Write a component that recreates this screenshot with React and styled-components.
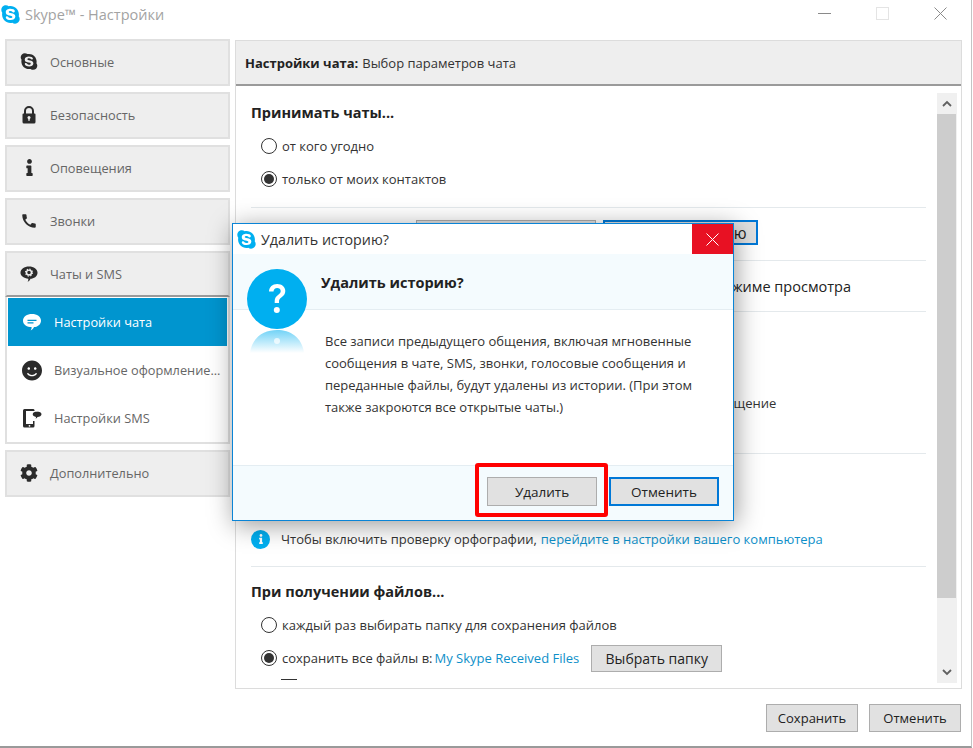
import React from "react";
import styled, { createGlobalStyle } from "styled-components";
import { FaSkype, FaInfo, FaCog, FaSmile } from "react-icons/fa";
import { MdCall } from "react-icons/md";

const Global = createGlobalStyle`
  html, body { margin: 0; padding: 0; background: #fff; overflow: hidden; }
  * { box-sizing: border-box; }
  body { font-family: "Open Sans", "Noto Sans", "Liberation Sans", sans-serif; color: #222; }
`;

const Page = styled.div`
  width: 973px;
  height: 748px;
  background: #fff;
`;

const Window = styled.div`
  position: relative;
  width: 972px;
  height: 748px;
  background: #fff;
  border-right: 1px solid #c4c4c4;
  border-bottom: 2px solid #9a9a9a;
  display: flex;
  flex-direction: column;
`;

const TitleBar = styled.header`
  height: 39px;
  flex: none;
  display: flex;
  align-items: flex-start;
  padding: 4px 0 0 0;
`;
const TitleText = styled.span`
  font-size: 14.5px;
  line-height: 20px;
  color: #a3a3a3;
  margin-left: 4px;
  margin-top: 1px;
`;
const TitleLogo = styled(FaSkype)`
  width: 21px;
  height: 21px;
  color: #00aff0;
  flex: none;
`;
const WinButtons = styled.div`
  margin-left: auto;
  display: flex;
  align-items: center;
  margin-right: 24px;
  margin-top: 3px;
  gap: 45px;
`;
const WinIcon = styled.svg`
  width: 13px;
  height: 13px;
  display: block;
  fill: none;
  stroke: ${p => p.$stroke || "#8a8a8a"};
  stroke-width: 1;
`;

const Body = styled.div`
  display: flex;
  height: 650px;
  flex: none;
  padding-left: 5px;
  gap: 5px;
`;

const Nav = styled.nav`
  width: 225px;
  flex: none;
  display: flex;
  flex-direction: column;
  gap: 6px;
`;
const NavGroup = styled.div`
  display: flex;
  flex-direction: column;
`;
const NavItem = styled.div`
  height: ${p => p.$h || 47}px;
  display: flex;
  align-items: center;
  background: #eeeeee;
  border: 2px solid #e0e0e0;
  ${p => p.$open && "border-bottom: 2px solid #9a9a9a;"}
  padding: 0 0 ${p => (p.$open ? 0 : 2)}px 13px;
  font-size: 12.75px;
  color: #666;
`;
const NavIconWrap = styled.span`
  width: 18px;
  height: 20px;
  margin-right: 12px;
  display: flex;
  align-items: center;
  justify-content: center;
  color: #2b2b2b;
  flex: none;
  svg { display: block; }
`;
const SubList = styled.div`
  height: 147px;
  flex: none;
  border: 2px solid #e0e0e0;
  border-top: 0;
  padding: 1px 1px 0;
  background: #fff;
  display: flex;
  flex-direction: column;
`;
const SubItem = styled.div`
  height: 48px;
  flex: none;
  display: flex;
  align-items: center;
  padding-left: 14px;
  font-size: 12.75px;
  white-space: nowrap;
  color: ${p => (p.$active ? "#fff" : "#666")};
  background: ${p => (p.$active ? "#0095cf" : "transparent")};
`;
const SubIconWrap = styled.span`
  width: 20px;
  margin-right: 12px;
  display: flex;
  justify-content: center;
  color: ${p => (p.$active ? "#fff" : "#2b2b2b")};
  flex: none;
  svg { display: block; }
`;

const Panel = styled.main`
  width: 727px;
  flex: none;
  display: flex;
  flex-direction: column;
  border: 1px solid #dcdcdc;
  margin-top: 1px;
  overflow: hidden;
`;
const PanelHeader = styled.div`
  height: 45px;
  flex: none;
  background: #eeeeee;
  border-bottom: 2px solid #9a9a9a;
  display: flex;
  align-items: center;
  padding-left: 9px;
  font-size: 13px;
  color: #333;
  b { font-weight: 700; margin-right: 4px; color: #222; }
`;
const PanelBody = styled.div`
  flex: 1;
  display: flex;
  min-height: 0;
  padding: 7px 4px 5px 15px;
`;
const Scroll = styled.div`
  flex: 1;
  min-width: 0;
  overflow: hidden;
  padding-right: 11px;
`;
const Section = styled.section`
  height: ${p => p.$h}px;
  border-bottom: ${p => (p.$last ? "none" : "1px solid #e4e9ec")};
  padding-top: ${p => p.$pt || 0}px;
`;
const Heading = styled.h3`
  margin: 0 0 ${p => p.$mb}px;
  font-size: 14.5px;
  line-height: 20px;
  font-weight: 700;
  color: #222;
`;
const RadioRow = styled.div`
  display: flex;
  align-items: center;
  height: 20px;
  margin: ${p => p.$mt || 0}px 0 13px 10px;
  font-size: 13px;
  color: #333;
  white-space: nowrap;
`;
const Radio = styled.span`
  width: 16px;
  height: 16px;
  border-radius: 50%;
  border: 1px solid #333;
  background: #fff;
  margin-right: 5px;
  flex: none;
  display: flex;
  align-items: center;
  justify-content: center;
  &::after {
    content: "";
    width: 10px;
    height: 10px;
    border-radius: 50%;
    background: ${p => (p.$on ? "#333" : "transparent")};
  }
`;
const Link = styled.a`
  color: #0e8fc9;
  margin-left: ${p => p.$ml || 0}px;
`;
const Btn = styled.button`
  font-family: inherit;
  font-size: ${p => p.$fs || 13}px;
  width: ${p => p.$w}px;
  height: ${p => p.$hgt || 28}px;
  margin-left: ${p => p.$ml || 0}px;
  flex: none;
  padding: 0;
  color: #222;
  background: #e1e1e1;
  white-space: nowrap;
  overflow: hidden;
  border: ${p => (p.$primary ? "2px solid #0078d7" : "1px solid #adadad")};
`;
const ButtonRow = styled.div`
  display: flex;
  gap: 7px;
  padding: 12px 0 0 165px;
  white-space: nowrap;
`;
const CheckRow = styled.div`
  padding: 16px 0 0 200px;
  font-size: 14.5px;
  white-space: nowrap;
  color: #222;
`;
const HiddenLine = styled.div`
  padding: 82px 0 0 151px;
  font-size: 13px;
  white-space: nowrap;
  color: #333;
`;
const InfoRow = styled.div`
  display: flex;
  align-items: center;
  font-size: 13px;
  color: #333;
  height: 20px;
  white-space: nowrap;
`;
const InfoDot = styled.span`
  width: 19px;
  height: 19px;
  border-radius: 50%;
  background: #00aff0;
  color: #fff;
  display: flex;
  align-items: center;
  justify-content: center;
  margin-right: 11px;
  flex: none;
`;
const Dash = styled.div`
  width: 16px;
  height: 1px;
  background: #333;
  margin: -2px 0 0 30px;
`;

const Track = styled.div`
  width: 20px;
  flex: none;
  background: #f0f0f0;
  display: flex;
  flex-direction: column;
  align-items: center;
`;
const TrackArrow = styled.div`
  height: 21px;
  flex: none;
  display: flex;
  align-items: center;
  justify-content: center;
`;
const Thumb = styled.div`
  width: 19px;
  height: 484px;
  flex: none;
  background: #cdcdcd;
  margin-right: 1px;
`;
const TrackRest = styled.div`
  flex: 1;
`;

const Footer = styled.footer`
  flex: 1;
  display: flex;
  justify-content: flex-end;
  gap: 11px;
  padding: 15px 10px 0 0;
`;

const Dialog = styled.div`
  position: absolute;
  left: 232px;
  top: 223px;
  width: 502px;
  height: 298px;
  border: 1px solid #0a84d6;
  background: #fff;
  box-shadow: 2px 4px 24px rgba(0, 0, 0, 0.4);
  display: flex;
  flex-direction: column;
`;
const DialogTitle = styled.div`
  height: 30px;
  flex: none;
  display: flex;
  align-items: center;
  padding-left: 3px;
  font-size: 14.25px;
  color: #333;
  span { margin-left: 4px; }
`;
const DialogClose = styled.div`
  margin-left: auto;
  width: 41px;
  height: 30px;
  background: #e81123;
  display: flex;
  align-items: center;
  justify-content: center;
`;
const DialogHead = styled.div`
  height: 56px;
  flex: none;
  background: #f4fbfe;
  border-bottom: 1px solid #e4edf2;
  padding: 19px 0 0 88px;
  font-size: 14.5px;
  line-height: 20px;
  font-weight: 700;
  color: #222;
`;
const DialogMain = styled.div`
  flex: 1;
  padding: 20px 30px 0 92px;
  font-size: 13px;
  line-height: 22px;
  color: #333;
`;
const DialogFoot = styled.div`
  height: 55px;
  flex: none;
  background: #f4fbfe;
  border-top: 1px solid #e4edf2;
  display: flex;
  justify-content: flex-end;
  gap: 12px;
  padding: 11px 14px 0 0;
`;
const QuestionBadge = styled.div`
  position: absolute;
  left: 14px;
  top: 45px;
  width: 60px;
  height: 84px;
`;
const Highlight = styled.div`
  position: absolute;
  left: 475px;
  top: 463px;
  width: 133px;
  height: 54px;
  border: 4px solid #ff0000;
  border-radius: 3px;
  pointer-events: none;
`;

const ChatGearIcon = () => (
  <svg width="19" height="18" viewBox="0 0 19 18">
    <path d="M9.5 1C14.5 1 18.5 3.800 18.500 7.600c0 3.800-4 6.400-7.500 6.400-.3 1.400-1.300 2.600-3 3.200.7-1 .9-2.100.8-3.300C4.300 13.500.5 11 .5 7.600.5 3.800 4.500 1 9.500 1z" fill="#2b2b2b" />
    <circle cx="9.500" cy="7.500" r="2.600" fill="none" stroke="#eee" strokeWidth="1.500" />
    <circle cx="9.500" cy="7.500" r="3.700" fill="none" stroke="#eee" strokeWidth="1.200" strokeDasharray="1.450 1.450" />
  </svg>
);
const ChatBubbleIcon = () => (
  <svg width="20" height="19" viewBox="0 0 20 19">
    <path d="M10 1c5 0 9 2.700 9 6.700 0 3.800-3.600 6.300-7 6.400-.5 1.300-1.700 2.700-3.300 3.400.7-1 1-2.200.9-3.400C5.200 14.100 1 11.700 1 7.700 1 3.700 5 1 10 1z" fill="#fff" />
    <path d="M5.500 6.700h9v1.200h-9zM5.500 9.200h6v1.200h-6z" fill="#0095cf" />
  </svg>
);
const PhoneMsgIcon = () => (
  <svg width="20" height="20" viewBox="0 0 20 20">
    <path d="M2.500 1h8.500a1.500 1.500 0 0 1 1.500 1v1H4v13h7v-3h1.500v5a1.500 1.500 0 0 1-1.500 1.500H2.500A1.500 1.500 0 0 1 1 18V2.500A1.500 1.500 0 0 1 2.500 1z" fill="#2b2b2b" />
    <circle cx="7.500" cy="17.800" r="0.900" fill="#fff" />
    <path d="M15 3.500c2.500 0 4.500 1.100 4.500 2.700s-2 2.700-4 2.800c-.3.700-1 1.300-2 1.700.4-.5.500-1.100.5-1.800-1.800-.3-3.300-1.300-3.300-2.700 0-1.600 2-2.700 4.800-2.700z" fill="#2b2b2b" />
  </svg>
);
const LockIcon = () => (
  <svg width="14" height="18" viewBox="0 0 14 18">
    <path d="M3 8V5a4 4 0 0 1 8 0v3" fill="none" stroke="#2b2b2b" strokeWidth="2" />
    <path d="M1.500 7.500h11a1 1 0 0 1 1 1V16a1.500 1.500 0 0 1-1.500 1.500H2A1.500 1.500 0 0 1 .5 16V8.500a1 1 0 0 1 1-1z" fill="#2b2b2b" />
    <circle cx="7" cy="11.500" r="1.500" fill="#eee" />
    <rect x="6.300" y="12" width="1.400" height="2.800" fill="#eee" />
  </svg>
);

const Chevron = ({ up }) => (
  <svg width="10" height="7" viewBox="0 0 10 7">
    <path d={up ? "M1 6l4-4 4 4" : "M1 1l4 4 4-4"} fill="none" stroke="#606060" strokeWidth="1.800" />
  </svg>
);

const Question = () => (
  <svg width="60" height="84" viewBox="0 0 60 84">
    <defs>
      <linearGradient id="refl" x1="0" y1="0" x2="0" y2="1">
        <stop offset="0" stopColor="#00aff0" stopOpacity="0.55" />
        <stop offset="1" stopColor="#00aff0" stopOpacity="0" />
      </linearGradient>
    </defs>
    <path d="M3 84C5 68 17 61 30 61s25 7 27 23z" fill="url(#refl)" />
    <circle cx="30" cy="30" r="30" fill="#00aff0" />
    <path d="M22 22.500c0-4.500 3.500-7.500 8.200-7.500 4.600 0 8.100 2.800 8.100 7 0 3-1.600 4.700-3.700 6.300-1.900 1.400-2.600 2.300-2.600 4.300v1.400h-4.300v-1.900c0-3 1.200-4.600 3.300-6.200 1.800-1.300 2.700-2.200 2.700-3.900 0-1.900-1.500-3.100-3.500-3.100-2.200 0-3.600 1.500-3.700 3.600z" fill="#fff" />
    <circle cx="29.800" cy="41" r="3" fill="#fff" />
    <circle cx="30" cy="72" r="3" fill="#fff" opacity="0.7" />
  </svg>
);

const NAV_TOP = [
  { label: "Основные", icon: <FaSkype size={19} /> },
  { label: "Безопасность", icon: <LockIcon /> },
  { label: "Оповещения", icon: <FaInfo size={17} /> },
  { label: "Звонки", icon: <MdCall size={22} /> },
];
const SUB = [
  { label: "Настройки чата", icon: <ChatBubbleIcon />, active: true },
  { label: "Визуальное оформление...", icon: <FaSmile size={21} /> },
  { label: "Настройки SMS", icon: <PhoneMsgIcon /> },
];

export default function App() {
  return (
    <Page>
      <Global />
      <Window>
        <TitleBar>
          <TitleLogo />
          <TitleText>Skype™ - Настройки</TitleText>
          <WinButtons>
            <WinIcon viewBox="0 0 13 13"><path d="M0 6.500h13" /></WinIcon>
            <WinIcon viewBox="0 0 13 13" $stroke="#e4e4e4"><rect x="0.500" y="0.500" width="12" height="12" /></WinIcon>
            <WinIcon viewBox="0 0 13 13"><path d="M0.500 0.500l12 12M12.500 0.500l-12 12" /></WinIcon>
          </WinButtons>
        </TitleBar>
        <Body>
          <Nav>
            {NAV_TOP.map(n => (
              <NavItem key={n.label}>
                <NavIconWrap>{n.icon}</NavIconWrap>
                {n.label}
              </NavItem>
            ))}
            <NavGroup>
              <NavItem $open $h={46}>
                <NavIconWrap><ChatGearIcon /></NavIconWrap>
                Чаты и SMS
              </NavItem>
              <SubList>
                {SUB.map(s => (
                  <SubItem key={s.label} $active={s.active}>
                    <SubIconWrap $active={s.active}>{s.icon}</SubIconWrap>
                    {s.label}
                  </SubItem>
                ))}
              </SubList>
            </NavGroup>
            <NavItem>
              <NavIconWrap><FaCog size={18} /></NavIconWrap>
              Дополнительно
            </NavItem>
          </Nav>
          <Panel>
            <PanelHeader><b>Настройки чата:</b> Выбор параметров чата</PanelHeader>
            <PanelBody>
              <Scroll>
                <Section $h={115} $pt={10}>
                  <Heading $mb={13}>Принимать чаты...</Heading>
                  <RadioRow><Radio />от кого угодно</RadioRow>
                  <RadioRow><Radio $on />только от моих контактов</RadioRow>
                </Section>
                <Section $h={53}>
                  <ButtonRow>
                    <Btn $w={180} $hgt={25} $fs={15}>Заблокированные</Btn>
                    <Btn $w={155} $hgt={25} $fs={15.5} $primary>Удалить историю</Btn>
                  </ButtonRow>
                </Section>
                <Section $h={51}>
                  <CheckRow>Показывать изображения и файлы в режиме просмотра</CheckRow>
                </Section>
                <Section $h={142}>
                  <HiddenLine>При нажатии клавиши Enter отправлять новое сообщение</HiddenLine>
                </Section>
                <Section $h={113} $pt={75}>
                  <InfoRow>
                    <InfoDot><FaInfo size={10} /></InfoDot>
                    Чтобы включить проверку орфографии,
                    <Link $ml={4}>перейдите в настройки вашего компьютера</Link>
                  </InfoRow>
                </Section>
                <Section $last $pt={15}>
                  <Heading $mb={13}>При получении файлов...</Heading>
                  <RadioRow><Radio />каждый раз выбирать папку для сохранения файлов</RadioRow>
                  <RadioRow $mt={2}>
                    <Radio $on />сохранить все файлы в:
                    <Link $ml={2}>My Skype Received Files</Link>
                    <Btn $w={131} $hgt={27} $fs={14} $ml={12}>Выбрать папку</Btn>
                  </RadioRow>
                  <Dash />
                </Section>
              </Scroll>
              <Track>
                <TrackArrow><Chevron up /></TrackArrow>
                <Thumb />
                <TrackRest />
                <TrackArrow><Chevron /></TrackArrow>
              </Track>
            </PanelBody>
          </Panel>
        </Body>
        <Footer>
          <Btn $w={92}>Сохранить</Btn>
          <Btn $w={92}>Отменить</Btn>
        </Footer>
        <Dialog>
          <DialogTitle>
            <TitleLogo />
            <span>Удалить историю?</span>
            <DialogClose>
              <WinIcon viewBox="0 0 13 13" $stroke="#fff"><path d="M0.500 0.500l12 12M12.500 0.500l-12 12" /></WinIcon>
            </DialogClose>
          </DialogTitle>
          <DialogHead>Удалить историю?</DialogHead>
          <DialogMain>
            Все записи предыдущего общения, включая мгновенные сообщения в чате, SMS, звонки, голосовые сообщения и переданные файлы, будут удалены из истории. (При этом также закроются все открытые чаты.)
          </DialogMain>
          <DialogFoot>
            <Btn $w={110} $hgt={29} $fs={13.5}>Удалить</Btn>
            <Btn $w={110} $hgt={29} $fs={13.5} $primary>Отменить</Btn>
          </DialogFoot>
          <QuestionBadge><Question /></QuestionBadge>
        </Dialog>
        <Highlight />
      </Window>
    </Page>
  );
}
